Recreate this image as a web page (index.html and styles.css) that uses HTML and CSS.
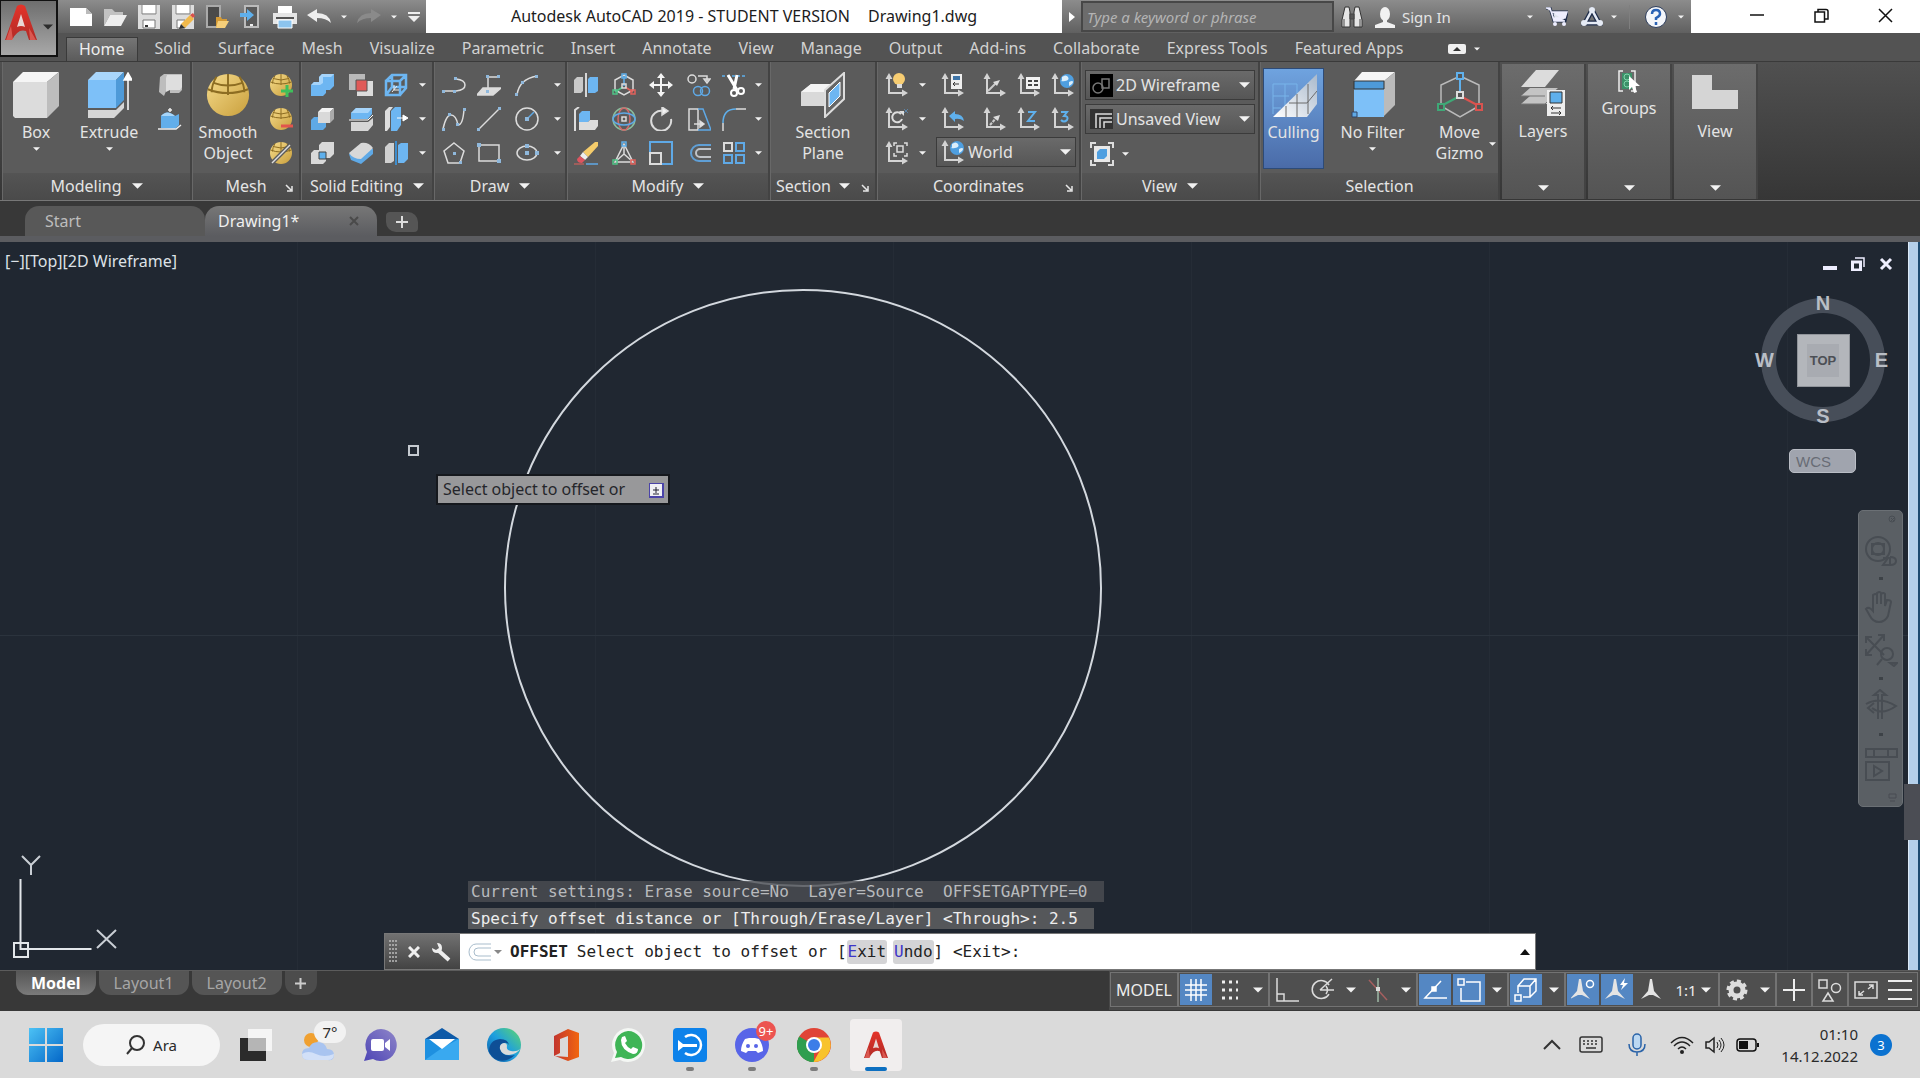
FILE: index.html
```html
<!DOCTYPE html>
<html lang="en">
<head>
    <meta charset="UTF-8">
    <meta name="viewport" content="width=device-width, initial-scale=1.0">
    <title>Autodesk AutoCAD 2019 - STUDENT VERSION</title>
    <link rel="stylesheet" href="styles.css">
</head>
<body>

<!-- Shared symbols -->
<svg class="defs" aria-hidden="true">
    <defs>
        <linearGradient id="gold" x1="0" y1="0" x2="1" y2="1"><stop offset="0" stop-color="#f6dc8c"/><stop offset="1" stop-color="#c99f3c"/></linearGradient>
        <linearGradient id="red" x1="0" y1="0" x2="0" y2="1"><stop offset="0" stop-color="#e5342a"/><stop offset="1" stop-color="#b02a26"/></linearGradient>
        <linearGradient id="win" x1="0" y1="0" x2="1" y2="1"><stop offset="0" stop-color="#4cc2f5"/><stop offset="1" stop-color="#0467c8"/></linearGradient>
        <linearGradient id="edge" x1="0" y1="1" x2="1" y2="0"><stop offset="0" stop-color="#0c59a4"/><stop offset=".5" stop-color="#1e9fdf"/><stop offset="1" stop-color="#5fd86b"/></linearGradient>
        <linearGradient id="office" x1="0" y1="0" x2="1" y2="0"><stop offset="0" stop-color="#c2352e"/><stop offset="1" stop-color="#f2660f"/></linearGradient>
        <linearGradient id="chat" x1="1" y1="0" x2="0" y2="1"><stop offset="0" stop-color="#8f86c9"/><stop offset="1" stop-color="#4d45b5"/></linearGradient>
        <linearGradient id="cull" x1="0" y1="1" x2="1" y2="0"><stop offset="0" stop-color="#fff"/><stop offset="1" stop-color="#a9b9cc"/></linearGradient>
    </defs>
    <symbol id="caret" viewBox="0 0 12 6"><path d="M0 0h12l-6 6z" fill="#f2f2f2"/></symbol>
    <symbol id="axes" viewBox="0 0 24 24"><path d="M4 4v16h16" fill="none" stroke="#d4d4d4" stroke-width="2"/><path d="M4 0l3.500 6h-7zM23 20l-6-3.500v7z" fill="#d4d4d4"/></symbol>
    <symbol id="globe" viewBox="0 0 14 14"><circle cx="7" cy="7" r="7" fill="#4f9fe0"/><path d="M2 3q4-3 6 0t-3 4-3-1zM9 8q4-2 4 0t-4 4z" fill="#dbeefb"/></symbol>
    <symbol id="ball" viewBox="0 0 24 24"><circle cx="12" cy="12" r="11" fill="url(#gold)"/><path d="M1.500 9q10 4 21 0M12 1v11M6 2.500q-2.500 4-2.500 8M18 2.500q2.500 4 2.500 8M4 5.500q8 3 16 0" fill="none" stroke="#8d6d22" stroke-width="1"/></symbol>
    <symbol id="launch" viewBox="0 0 8 8"><path d="M1 1l5 5M7 2v5h-5" fill="none" stroke="#e6e6e6" stroke-width="1.500"/></symbol>
    <symbol id="logo" viewBox="0 0 32 36"><path d="M0 36L12 2q4-3 8 0l12 34h-8l-3-9q-8-3-14 9z" fill="url(#red)"/><path d="M16 10l-4 13q4-2 8 0z" fill="#e9d8d6"/><path d="M1 36l5-14 2 14M24 24l7 12h-6z" fill="#f2776c" opacity=".6"/></symbol>
    <symbol id="offset" viewBox="0 0 24 24"><path d="M24 4H12a8 8 0 0 0 0 16h12" fill="none" stroke="#5f9fd6" stroke-width="2"/><path d="M24 8H13a4 4 0 0 0 0 8h11" fill="none" stroke="#bfc3c8" stroke-width="2"/></symbol>
    <symbol id="scale" viewBox="0 0 24 24"><path d="M11 1h2l2 12 7 8-8-4h-4l-8 4 7-8z" fill="currentColor"/></symbol>
</svg>

<header class="header">
    <button class="app-btn" aria-label="Application menu">
        <svg width="32" height="38"><use href="#logo"/></svg>
        <svg class="app-caret" width="10" height="6" viewBox="0 0 12 6"><path d="M0 0h12l-6 6z" fill="#2c2c2c"/></svg>
    </button>

    <div class="titlebar">
        <div class="quick">
            <button aria-label="New"><svg width="24" height="20" viewBox="0 0 24 20"><path d="M1 1h16l6 6v12H1z" fill="#fff"/><path d="M17 1v6h6" fill="#bbb"/></svg></button>
            <button aria-label="Open"><svg width="24" height="20" viewBox="0 0 24 20"><path d="M1 19V2h8l3 3h8v3H7z" fill="#c2c2c2"/><path d="M7 8h17l-6 11H1z" fill="#eee"/></svg></button>
            <button aria-label="Save"><svg width="24" height="24" viewBox="0 0 24 24"><path d="M1 0h22v24H1z" fill="#ddd"/><path d="M5 0h14v8H5z" fill="#fff"/><path d="M5 0v9h14V0" fill="none" stroke="#888"/><path d="M6 15h12v8H6z" fill="#fff" stroke="#777"/><path d="M8 20h3v2h-3z" fill="#333"/></svg></button>
            <button aria-label="Save As"><svg width="24" height="24" viewBox="0 0 24 24"><path d="M1 0h22v24H1z" fill="#ddd"/><path d="M5 0h14v8H5z" fill="#fff"/><path d="M5 0v9h14V0" fill="none" stroke="#888"/><path d="M6 15h8v8H6z" fill="#fff" stroke="#777"/><path d="M10 19l9-9 4 4-9 9z" fill="#f1b94b"/><path d="M19 10l3-2 2 3-2 2z" fill="#d9504a"/><path d="M10 19l-2 5 6-1z" fill="#333"/></svg></button>
            <button aria-label="Open from mobile"><svg width="24" height="24" viewBox="0 0 24 24"><path d="M2 1h13v21H2z" fill="#4a4a4a" stroke="#aaa" stroke-width="2"/><path d="M11 22V12h5l1 2h5v3z" fill="#d49a35"/><path d="M13 16h11l-4 7h-9z" fill="#f6cf7a"/></svg></button>
            <button aria-label="Save to mobile"><svg width="24" height="24" viewBox="0 0 24 24"><path d="M6 1h13v21H6z" fill="#5a5a5a" stroke="#bbb" stroke-width="2"/><path d="M11 19h3v2h-3z" fill="#eee"/><path d="M1 8h7V4l7 6-7 6v-4H1z" fill="#5fb0ec"/></svg></button>
            <button aria-label="Plot"><svg width="24" height="24" viewBox="0 0 24 24"><path d="M5 1h14v7H5z" fill="#fff"/><path d="M0 8h24v11H0z" fill="#e6e6e6"/><path d="M3 12h18v2H3z" fill="#555"/><path d="M5 15h14v8H5z" fill="#8cc4ee" stroke="#fff"/></svg></button>
            <button aria-label="Undo"><svg width="24" height="16" viewBox="0 0 24 16"><path d="M0 6l10-6v4q12 0 14 10-5-5-14-5v4z" fill="#eee"/></svg></button>
            <button class="slim" aria-label="Undo list"><svg width="6" height="4"><use href="#caret"/></svg></button>
            <button aria-label="Redo"><svg width="24" height="16" viewBox="0 0 24 16"><path d="M24 6L14 0v4Q2 4 0 14q5-5 14-5v4z" fill="#8a8a8a"/></svg></button>
            <button class="slim" aria-label="Redo list"><svg width="6" height="4"><use href="#caret"/></svg></button>
            <button class="last" aria-label="Customize"><svg width="12" height="10" viewBox="0 0 12 10"><path d="M0 0h12v2H0zM0 4h12l-6 6z" fill="#eee"/></svg></button>
        </div>
        <p class="caption">Autodesk AutoCAD 2019 - STUDENT VERSION<span>Drawing1.dwg</span></p>
        <div class="infocenter">
            <button class="info-toggle" aria-label="Collapse search"><svg width="6" height="10" viewBox="0 0 6 10"><path d="M0 0l6 5-6 5z" fill="#fff"/></svg></button>
            <input type="text" class="search" placeholder="Type a keyword or phrase" aria-label="Search">
            <button class="find" aria-label="Find"><svg width="22" height="22" viewBox="0 0 22 22"><path d="M4 1h4l1 5v15H1v-7zM14 1h4l3 13v7h-8V6z" fill="#e6e6e6" stroke="#333"/><path d="M9 8h4v5H9zM3 13v8M19 13v8" fill="#555" stroke="#444"/></svg></button>
            <button class="signin"><svg width="22" height="22" viewBox="0 0 22 22"><ellipse cx="11" cy="8" rx="5" ry="7" fill="#f1f1f1"/><path d="M9 13h4v3l8 3v3H1v-3l8-3z" fill="#f1f1f1"/></svg>Sign In<svg class="push" width="6" height="4"><use href="#caret"/></svg></button>
            <button class="cart" aria-label="App store"><svg width="22" height="20" viewBox="0 0 22 20"><path d="M0 1h4l4 13h11l2-9H6" fill="#dfe4ee" stroke="#1f2d4a" stroke-width="3"/><path d="M0 1h4l4 13h11M6 5h15l-2 6H8" fill="#eef" stroke="#eef" stroke-width="1.500"/><circle cx="9" cy="17" r="2" fill="#eef"/><circle cx="18" cy="17" r="2" fill="#eef"/></svg></button>
            <button class="a360" aria-label="Stay connected"><svg width="22" height="20" viewBox="0 0 22 20"><path d="M11 3L4 16h14z" fill="none" stroke="#1f2d4a" stroke-width="5"/><path d="M11 3L4 16h14z" fill="none" stroke="#e6ebf5" stroke-width="2.500"/><circle cx="11" cy="3" r="3" fill="#e6ebf5"/><circle cx="3" cy="16" r="3" fill="#e6ebf5"/><circle cx="19" cy="16" r="3" fill="#e6ebf5"/></svg><svg width="6" height="4"><use href="#caret"/></svg></button>
            <button class="help" aria-label="Help"><svg width="24" height="24" viewBox="0 0 24 24"><circle cx="12" cy="12" r="10.500" fill="#f4f6fa" stroke="#2d3d5c"/><path d="M8 9q0-4 4-4t4 4q0 2-4 4v2M12 17v3" fill="none" stroke="#2a62b4" stroke-width="2.500"/></svg><svg width="6" height="4"><use href="#caret"/></svg></button>
        </div>
        <div class="window-btns">
            <button aria-label="Minimize"><svg width="14" height="14" viewBox="0 0 14 14"><path d="M0 7h14" stroke="#111" stroke-width="1.500"/></svg></button>
            <button aria-label="Restore"><svg width="15" height="15" viewBox="0 0 15 15"><path d="M1 4h9.500v10H1zM4 4V1.500h8q2 0 2 2V11h-3" fill="none" stroke="#111" stroke-width="1.500"/></svg></button>
            <button aria-label="Close"><svg width="15" height="15" viewBox="0 0 15 15"><path d="M1 1l13 13M14 1L1 14" stroke="#111" stroke-width="1.500"/></svg></button>
        </div>
    </div>

    <nav class="tabs">
        <a href="#" class="active">Home</a>
        <a href="#">Solid</a>
        <a href="#">Surface</a>
        <a href="#">Mesh</a>
        <a href="#">Visualize</a>
        <a href="#">Parametric</a>
        <a href="#">Insert</a>
        <a href="#">Annotate</a>
        <a href="#">View</a>
        <a href="#">Manage</a>
        <a href="#">Output</a>
        <a href="#">Add-ins</a>
        <a href="#">Collaborate</a>
        <a href="#">Express Tools</a>
        <a href="#">Featured Apps</a>
        <button class="minimize" aria-label="Minimize ribbon"><svg width="18" height="10" viewBox="0 0 18 10"><rect width="18" height="10" rx="2" fill="#f0f0f0"/><path d="M5 7h8L9 3z" fill="#333"/></svg><svg width="6" height="4"><use href="#caret"/></svg></button>
    </nav>
</header>

<div class="ribbon">
    <!-- Modeling -->
    <section class="panel modeling">
        <div class="body">
            <button class="big"><svg width="46" height="46" viewBox="0 0 46 46"><path d="M0 10L10 0h36L34 10z" fill="#f5f5f5"/><path d="M0 10h34v36H2l-2-2z" fill="#dcdcdc"/><path d="M34 10L46 0v34L34 46z" fill="#bdbdbd"/></svg>Box<svg width="7" height="4"><use href="#caret"/></svg></button>
            <button class="big"><svg width="46" height="46" viewBox="0 0 46 46"><path d="M2 38h28l8-8v6L28 46H2z" fill="#d6d6d6"/><path d="M2 8l8-8h28l-8 8z" fill="#a9d6fb"/><path d="M2 8h28v28H2z" fill="#7dc0f8"/><path d="M30 8l8-8v28l-8 8z" fill="#4e9ad8"/><path d="M42 38V6M38 8l4-7 4 7z" fill="#fff" stroke="#fff" stroke-width="1.500"/></svg>Extrude<svg width="7" height="4"><use href="#caret"/></svg></button>
            <div class="grid">
                <button aria-label="Polysolid"><svg viewBox="0 0 24 24"><path d="M2 4l4-3h18v16l-3 3h-9V9L6 23l-5-4z" fill="#bdbdbd"/><path d="M9 2h15v12l-2 3H12l-4 2V5z" fill="#dedede"/></svg></button>
                <button aria-label="Presspull"><svg viewBox="0 0 24 24"><path d="M3 21V9q6-7 14 0l4-2v11l-4 4z" fill="#62aeea"/><path d="M3 9q6-7 14 0z" fill="#a8d5f8"/><path d="M12 5V1M10 3h4M0 22h18l5-4" fill="none" stroke="#eee" stroke-width="1.500"/></svg></button>
            </div>
        </div>
        <footer>Modeling<svg width="11" height="6"><use href="#caret"/></svg></footer>
    </section>

    <!-- Mesh -->
    <section class="panel mesh">
        <div class="body">
            <button class="big"><svg width="46" height="46"><use href="#ball"/></svg>Smooth<br>Object</button>
            <div class="grid">
                <button aria-label="Smooth more"><svg viewBox="0 0 24 24"><use href="#ball"/><path d="M18 12v12M12 18h12" stroke="#3fbf5b" stroke-width="3"/></svg></button>
                <button aria-label="Smooth less"><svg viewBox="0 0 24 24"><use href="#ball"/><path d="M12 19h12" stroke="#e2554d" stroke-width="3"/></svg></button>
                <button aria-label="Refine mesh"><svg viewBox="0 0 24 24"><use href="#ball"/><path d="M3 22L21 4" stroke="#5b5b5b" stroke-width="4"/><path d="M3 22L21 4" stroke="#ddd" stroke-width="1.500"/></svg></button>
            </div>
        </div>
        <footer>Mesh<svg class="corner" width="8" height="8"><use href="#launch"/></svg></footer>
    </section>

    <!-- Solid editing -->
    <section class="panel solid">
        <div class="body">
            <div class="grid">
                <button aria-label="Union"><svg viewBox="0 0 24 24"><path d="M1 12l3-3h5V4l3-3h12v12l-4 4h-4v3l-3 3H1z" fill="#6db6f2"/><path d="M1 12l3-3h5V4l3-3h12l-3 3h-8v6l-3 2z" fill="#a6d4fa"/></svg></button>
                <button aria-label="Intersect"><svg viewBox="0 0 24 24"><path d="M0 1h16v16H0z" fill="#b9b9b9"/><path d="M8 8h16v15H8z" fill="#dcdcdc"/><path d="M7 7h11v11H7z" fill="#e05a58" stroke="#555"/></svg></button>
                <button aria-label="Extract edges"><svg viewBox="0 0 24 24"><path d="M2 8h14v14H2zM2 8l6-6h14v13l-6 7M16 8l6-6M8 2v12M8 14L2 22M8 14h14" fill="none" stroke="#6db6f2" stroke-width="2.500"/><path d="M8 19l5-6M10 12v5h5" stroke="#eee" fill="none"/></svg></button>
                <button class="drop" aria-label="More edges"><svg width="7" height="4"><use href="#caret"/></svg></button>
                <button aria-label="Subtract"><svg viewBox="0 0 24 24"><path d="M1 13l3-3h12v10l-3 3H1z" fill="#5fa9e6"/><path d="M8 5l4-4h12l-4 4z" fill="#f2f2f2"/><path d="M8 5h12v11H8z" fill="#d9d9d9"/><path d="M20 5l4-4v11l-4 4z" fill="#aaa"/></svg></button>
                <button aria-label="Slice"><svg viewBox="0 0 24 24"><path d="M2 6l5-5h16v6l-4 5H2z" fill="#6db6f2"/><path d="M2 6l5-5h16l-4 5z" fill="#a6d4fa"/><path d="M2 15h17l5-4v7l-5 6H2z" fill="#d6d6d6"/><path d="M0 13h19l5-5" stroke="#fff" fill="none"/></svg></button>
                <button aria-label="Thicken"><svg viewBox="0 0 24 24"><path d="M1 4l4-4h4L6 4v16l-3 4H1z" fill="#ddd"/><path d="M7 4l4-4h6v18l-4 6H7z" fill="#6db6f2"/><path d="M13 11h8M19 8l5 3-5 3z" fill="#fff" stroke="#fff"/></svg></button>
                <button class="drop" aria-label="More faces"><svg width="7" height="4"><use href="#caret"/></svg></button>
                <button aria-label="Interfere"><svg viewBox="0 0 24 24"><path d="M1 12l3-3h5V4l3-3h12v12l-4 4h-4v3l-3 3H1z" fill="#d9d9d9"/><path d="M9 11h7v7H9z" fill="#5fb0ec" stroke="#444"/></svg></button>
                <button aria-label="Fillet edge"><svg viewBox="0 0 24 24"><path d="M0 13L12 3l12 5v5L12 23 2 19z" fill="#5fa9e6"/><path d="M0 12L12 2q8-1 12 5L12 18Q4 18 0 12z" fill="#d8d8d8"/></svg></button>
                <button aria-label="Separate"><svg viewBox="0 0 24 24"><path d="M1 6l4-4h5v18l-3 2H1z" fill="#d0d0d0"/><path d="M14 4l3-2h7v16l-4 4h-6z" fill="#6db6f2"/><path d="M12 0v24" stroke="#3f8dcc" stroke-width="2"/></svg></button>
                <button class="drop" aria-label="More bodies"><svg width="7" height="4"><use href="#caret"/></svg></button>
            </div>
        </div>
        <footer>Solid Editing<svg width="11" height="6"><use href="#caret"/></svg></footer>
    </section>

    <!-- Draw -->
    <section class="panel draw">
        <div class="body">
            <div class="grid">
                <button aria-label="Polyline"><svg viewBox="0 0 24 24" class="ln"><path d="M1 18h13q9-1 9-6t-9-6"/><path class="dot" d="M0 17h3v3H0zM11 17h3v3h-3zM12 4h3v3h-3z"/></svg></button>
                <button aria-label="3D polyline"><svg viewBox="0 0 24 24" class="ln"><path d="M6 15h18l-8 7H0z" fill="#dcdcdc"/><path d="M11 18V4h11"/><path class="dot" d="M9 2h3v3H9zM20 2h3v3h-3zM9 17h3v3H9z"/></svg></button>
                <button aria-label="Arc"><svg viewBox="0 0 24 24" class="ln"><path d="M2 22Q4 6 22 3"/><path class="dot" d="M0 20h3v3H0zM6 8h3v3H6zM20 2h3v3h-3z"/></svg></button>
                <button class="drop" aria-label="More arcs"><svg width="7" height="4"><use href="#caret"/></svg></button>
                <button aria-label="Spline"><svg viewBox="0 0 24 24" class="ln"><path d="M1 22Q4 8 9 8t7 10q5 0 6-16"/><path class="dot" d="M0 21h3v3H0zM6 6h3v3H6zM14 16h3v3h-3zM21 1h3v3h-3z"/></svg></button>
                <button aria-label="Line"><svg viewBox="0 0 24 24" class="ln"><path d="M2 22L22 2"/><path class="dot" d="M0 21h3v3H0zM21 0h3v3h-3z"/></svg></button>
                <button aria-label="Circle"><svg viewBox="0 0 24 24" class="ln"><circle cx="12" cy="12" r="11"/><path d="M12 12l7-7" stroke="#5fa9e6"/><path class="dot" d="M10 10h4v4h-4z"/></svg></button>
                <button class="drop" aria-label="More circles"><svg width="7" height="4"><use href="#caret"/></svg></button>
                <button aria-label="Polygon"><svg viewBox="0 0 24 24" class="ln"><path d="M12 2l10 8-4 12H6L2 10z"/><path class="dot" d="M11 11h3v3h-3zM17 20h3v3h-3z"/></svg></button>
                <button aria-label="Rectangle"><svg viewBox="0 0 24 24" class="ln"><path d="M2 4h20v16H2z"/><path class="dot" d="M0 2h4v4H0zM20 18h4v4h-4z"/></svg></button>
                <button aria-label="Ellipse"><svg viewBox="0 0 24 24" class="ln"><ellipse cx="12" cy="12" rx="10" ry="7"/><path class="dot" d="M10 3h4v4h-4zM20 10h4v4h-4zM10 10h4v4h-4z"/></svg></button>
                <button class="drop" aria-label="More ellipses"><svg width="7" height="4"><use href="#caret"/></svg></button>
            </div>
        </div>
        <footer>Draw<svg width="11" height="6"><use href="#caret"/></svg></footer>
    </section>

    <!-- Modify -->
    <section class="panel modify">
        <div class="body">
            <div class="grid">
                <button aria-label="3D mirror"><svg viewBox="0 0 24 24"><path d="M0 7l3-3h6v14l-2 2H0z" fill="#c9c9c9"/><path d="M14 6l2-2h8v14l-3 2h-7z" fill="#6db6f2"/><path d="M12 0v24" stroke="#fff" stroke-width="1.500"/></svg></button>
                <button aria-label="3D move"><svg viewBox="0 0 24 24" class="ln"><path d="M12 2l9 5v10l-9 5-9-5V7z"/><path d="M12 13V3" stroke="#5fb0ec"/><path d="M11 14l-8 5" stroke="#4fc487"/><path d="M13 14l8 5" stroke="#e2625c"/><path d="M10 1h4v4h-4z" stroke="#5fb0ec"/><path d="M1 17h4v4H1z" stroke="#4fc487"/><path d="M19 17h4v4h-4z" stroke="#e2625c"/><path d="M10 11h4v4h-4z"/></svg></button>
                <button aria-label="Move"><svg viewBox="0 0 24 24"><path d="M12 3v18M3 12h18" stroke="#f4f4f4" stroke-width="2"/><path d="M12 0l4 5H8zM12 24l4-5H8zM0 12l5-4v8zM24 12l-5-4v8z" fill="#f4f4f4"/></svg></button>
                <button aria-label="Copy"><svg viewBox="0 0 24 24" class="ln"><circle cx="5" cy="6" r="4"/><path d="M11 3h9v5M17 6l3 4 3-4z"/><circle cx="11" cy="18" r="4.500" stroke="#5fa9e6"/><circle cx="18" cy="18" r="4.500" stroke="#5fa9e6"/></svg></button>
                <button aria-label="Trim"><svg viewBox="0 0 24 24"><path d="M0 3h24" stroke="#5fb0ec" stroke-width="1.500" stroke-dasharray="3 2"/><path d="M6 2l9 15M15 2l-3 14" stroke="#fff" stroke-width="3"/><circle cx="12" cy="20" r="3" fill="none" stroke="#fff" stroke-width="2"/><circle cx="19" cy="18" r="3" fill="none" stroke="#fff" stroke-width="2"/></svg></button>
                <button class="drop" aria-label="Trim list"><svg width="7" height="4"><use href="#caret"/></svg></button>
                <button aria-label="3D align"><svg viewBox="0 0 24 24"><path d="M1 24V3l4-3" stroke="#ddd" stroke-width="2" fill="none"/><path d="M5 7l3-3h8v9l-3 3H5z" fill="#6db6f2"/><path d="M5 15l9 0 2-2h8v6l-3 4H5z" fill="#ddd"/></svg></button>
                <button aria-label="3D rotate"><svg viewBox="0 0 24 24" class="ln"><circle cx="12" cy="12" r="11" stroke="#8bbf9e"/><ellipse cx="12" cy="12" rx="6" ry="11" stroke="#d0696b"/><ellipse cx="12" cy="12" rx="11" ry="6" stroke="#5fa9e6"/><path d="M10 10h4v4h-4z"/></svg></button>
                <button aria-label="Rotate"><svg viewBox="0 0 24 24" class="ln"><path d="M14 4A10 10 0 1 0 22 12" stroke-width="2"/><path d="M13 0l6 4-6 4z" fill="#f2f2f2"/></svg></button>
                <button aria-label="Stretch"><svg viewBox="0 0 24 24" class="ln"><path d="M2 2h9v21H2z"/><path d="M11 2h5l8 21H11" stroke="#5fa9e6"/><path d="M7 17h8M13 14l4 3-4 3z" fill="#fff"/></svg></button>
                <button aria-label="Fillet"><svg viewBox="0 0 24 24" class="ln"><path d="M1 24V16" /><path d="M1 16Q1 2 14 2" stroke="#5fb0ec"/><path d="M14 2h10"/></svg></button>
                <button class="drop" aria-label="Fillet list"><svg width="7" height="4"><use href="#caret"/></svg></button>
                <button aria-label="Erase"><svg viewBox="0 0 24 24"><path d="M9 11L21 1l3 0v4L14 16z" fill="#f5cc6b"/><path d="M9 11l5 5-3 3-5-4z" fill="#eee"/><path d="M6 15l5 4-3 3q-5 0-5-4z" fill="#dd5560"/><path d="M0 23h10" stroke="#e2625c"/><path d="M12 23h12" stroke="#5fa9e6" stroke-width="1.500"/></svg></button>
                <button aria-label="3D scale"><svg viewBox="0 0 24 24" class="ln"><path d="M12 3l9 18H3zM12 13L3 21M12 13l9 8M12 3v10"/><path d="M10 1h4v4h-4z" stroke="#5fb0ec"/><path d="M1 19h4v4H1z" stroke="#4fc487"/><path d="M19 19h4v4h-4z" stroke="#e2625c"/></svg></button>
                <button aria-label="Scale"><svg viewBox="0 0 24 24" class="ln"><path d="M1 12V1h22v22H13" stroke="#5fa9e6" stroke-width="2"/><path d="M1 12h11v11H1z" stroke-width="2"/></svg></button>
                <button aria-label="Offset"><svg viewBox="0 0 24 24"><use href="#offset"/></svg></button>
                <button aria-label="Array"><svg viewBox="0 0 24 24" class="ln"><path d="M2 2h8v8H2z" stroke-width="2"/><path d="M14 2h8v8h-8zM2 14h8v8H2zM14 14h8v8h-8z" stroke="#5fa9e6" stroke-width="2"/></svg></button>
                <button class="drop" aria-label="Array list"><svg width="7" height="4"><use href="#caret"/></svg></button>
            </div>
        </div>
        <footer>Modify<svg width="11" height="6"><use href="#caret"/></svg></footer>
    </section>

    <!-- Section -->
    <section class="panel section">
        <div class="body">
            <button class="big"><svg width="46" height="46" viewBox="0 0 46 46"><path d="M1 20l10-8h20v22H1z" fill="#d9d9d9"/><path d="M1 20l10-8h20l-6 8z" fill="#f4f4f4"/><path d="M25 18L44 1v26L25 45z" fill="#666" stroke="#ddd" stroke-width="2"/><path d="M29 21l11-11v14L29 35z" fill="#6db6f2" stroke="#fff"/></svg>Section<br>Plane</button>
        </div>
        <footer>Section<svg width="11" height="6"><use href="#caret"/></svg><svg class="corner" width="8" height="8"><use href="#launch"/></svg></footer>
    </section>

    <!-- Coordinates -->
    <section class="panel coords">
        <div class="body">
            <div class="grid">
                <button aria-label="UCS icon"><svg viewBox="0 0 24 24"><use href="#axes"/><circle cx="14" cy="6" r="6" fill="#f7cd72"/><path d="M12 11h5v4h-5z" fill="#ddd"/></svg></button>
                <button class="drop" aria-label="UCS icon list"><svg width="7" height="4"><use href="#caret"/></svg></button>
                <button aria-label="Named UCS"><svg viewBox="0 0 24 24"><use href="#axes"/><path d="M10 1h11v15H10z" fill="#eee"/><path d="M12 3h7v4h-7z" fill="#3f75a8"/><path d="M12 11h6M14 9l-2 2 2 2" stroke="#333" fill="none"/></svg></button>
                <button aria-label="Origin"><svg viewBox="0 0 24 24"><use href="#axes"/><path d="M5 18L14 9" stroke="#ccc" stroke-width="2"/><path d="M17 7l-7 2 4 4z" fill="#ddd"/></svg></button>
                <button aria-label="UCS settings"><svg viewBox="0 0 24 24"><use href="#axes"/><path d="M9 4h14v12H9z" fill="#f2f2f2"/><path d="M11 8h4M17 8h4M11 12h4M17 12h4" stroke="#444" stroke-width="2"/></svg></button>
                <button aria-label="World UCS"><svg viewBox="0 0 24 24"><use href="#axes"/><use href="#globe" x="9" y="1" width="14" height="14"/></svg></button>
                <button aria-label="Rotate UCS"><svg viewBox="0 0 24 24"><use href="#axes"/><path d="M16 7a5 5 0 1 0 1 5" fill="none" stroke="#ddd" stroke-width="2"/><path d="M14 4h5v5z" fill="#ddd"/><path d="M19 2l4 4M23 2l-4 4" stroke="#5d84a6"/></svg></button>
                <button class="drop" aria-label="Rotate UCS list"><svg width="7" height="4"><use href="#caret"/></svg></button>
                <button aria-label="UCS previous"><svg viewBox="0 0 24 24"><use href="#axes"/><path d="M8 9l6-5v3q8 0 9 7-4-3-9-2v3z" fill="#5fb0ec"/></svg></button>
                <button aria-label="Z-axis vector"><svg viewBox="0 0 24 24"><use href="#axes"/><path d="M7 18l7-8" stroke="#ccc" stroke-width="2" stroke-dasharray="3 1"/><path d="M17 8l-7 2 5 4z" fill="#ddd"/></svg></button>
                <button aria-label="Z rotation"><svg viewBox="0 0 24 24"><use href="#axes"/><path d="M11 5h7l-7 9h7" fill="none" stroke="#5fb0ec" stroke-width="2"/></svg></button>
                <button aria-label="3-point UCS"><svg viewBox="0 0 24 24"><use href="#axes"/><path d="M10 5h6l-3 4q5 0 3 4-3 3-6 0" fill="none" stroke="#5fb0ec" stroke-width="2"/></svg></button>
                <button aria-label="UCS view"><svg viewBox="0 0 24 24"><use href="#axes"/><path d="M9 5V2h3M19 2h3v3M22 12v3h-3M12 15H9v-3M12 5h6v6h-6z" fill="none" stroke="#ddd" stroke-width="1.500"/></svg></button>
                <button class="drop" aria-label="UCS view list"><svg width="7" height="4"><use href="#caret"/></svg></button>
                <div class="combo world">
                    <svg width="24" height="24" viewBox="0 0 24 24"><use href="#axes"/><use href="#globe" x="9" y="1" width="14" height="14"/></svg>
                    <select aria-label="Coordinate system"><option>World</option></select>
                    <svg width="11" height="6"><use href="#caret"/></svg>
                </div>
            </div>
        </div>
        <footer>Coordinates<svg class="corner" width="8" height="8"><use href="#launch"/></svg></footer>
    </section>

    <!-- View -->
    <section class="panel view">
        <div class="body stack">
            <div class="combo">
                <svg width="23" height="23" viewBox="0 0 23 23"><path d="M0 0h23v23H0z" fill="#000"/><circle cx="8" cy="14" r="5" fill="none" stroke="#777" stroke-width="1.500"/><path d="M12 5h7v9h-7z" fill="none" stroke="#777" stroke-width="1.500"/></svg>
                <select aria-label="Visual style"><option>2D Wireframe</option></select>
                <svg width="11" height="6"><use href="#caret"/></svg>
            </div>
            <div class="combo">
                <svg width="23" height="20" viewBox="0 0 23 20"><path d="M0 0h23v20H0z" fill="#333"/><path d="M6 19V5h16M10 19V9h12M14 19v-6h8" fill="none" stroke="#ddd" stroke-width="1.500"/></svg>
                <select aria-label="Saved view"><option>Unsaved View</option></select>
                <svg width="11" height="6"><use href="#caret"/></svg>
            </div>
            <button class="viewbtn" aria-label="View manager"><svg width="24" height="24" viewBox="0 0 24 24"><path d="M1 6V1h5M18 1h5v5M23 18v5h-5M6 23H1v-5" fill="none" stroke="#ddd" stroke-width="2"/><path d="M4 4h16v16H4z" fill="#e8e8e8"/><path d="M7 10l3-3h7v7l-3 3H7z" fill="#4f9fe0"/></svg><svg width="7" height="4"><use href="#caret"/></svg></button>
        </div>
        <footer>View<svg width="11" height="6"><use href="#caret"/></svg></footer>
    </section>

    <!-- Selection -->
    <section class="panel selection">
        <div class="body">
            <button class="big on"><svg width="46" height="46" viewBox="0 0 46 46"><path d="M2 12h24M2 24h16M2 36h8M2 12v30M14 12v22M26 12v12" stroke="#79b4ea" fill="none"/><path d="M2 45L46 2v30L36 45z" fill="url(#cull)"/><path d="M15 34v11M26 22v23M37 12v30M18 31h18l10-12" stroke="#6b6b6b" fill="none"/></svg>Culling</button>
            <button class="big"><svg width="46" height="46" viewBox="0 0 46 46"><path d="M4 9L12 0h33L34 9z" fill="#f5f5f5"/><path d="M34 9L45 0v33L34 44z" fill="#bbb"/><path d="M4 9h30v36H4z" fill="#7dc0f8"/><path d="M4 9h30v8H4z" fill="#4e9ad8" stroke="#333"/><path d="M2 40h5v5H2z" fill="#5fa9e6" stroke="#346"/></svg>No Filter<svg width="7" height="4"><use href="#caret"/></svg></button>
            <button class="big gizmo"><svg width="46" height="46" viewBox="0 0 46 46"><path d="M23 4l19 9v21l-19 11L4 34V13z" fill="none" stroke="#bbb" stroke-width="1.500"/><path d="M23 21V4" stroke="#5fb0ec" stroke-width="2"/><path d="M21 25L4 34" stroke="#3fa877" stroke-width="2"/><path d="M25 25l17 9" stroke="#d9534f" stroke-width="2"/><path d="M20 1h6v6h-6z" fill="#555" stroke="#5fb0ec" stroke-width="2"/><path d="M1 32h6v6H1z" fill="#555" stroke="#3fa877" stroke-width="2"/><path d="M39 32h6v6h-6z" fill="#555" stroke="#d9534f" stroke-width="2"/><path d="M20 20h6v6h-6z" fill="#555" stroke="#ddd" stroke-width="2"/></svg>Move<br>Gizmo<svg class="side" width="7" height="4"><use href="#caret"/></svg></button>
        </div>
        <footer>Selection</footer>
    </section>

    <!-- Collapsed panels -->
    <button class="folded">
        <svg width="46" height="46" viewBox="0 0 46 46"><path d="M1 34l9-8h28l-9 8zM1 26l9-8h28l-9 8z" fill="#c4c4c4"/><path d="M1 17L16 0h23L25 17z" fill="#dcdcdc"/><path d="M1 34h24l4-4M1 26h24" stroke="#777" fill="none"/><path d="M27 20h18v26H27z" fill="#eee"/><path d="M30 22h12v11H30z" fill="#5fb0ec" stroke="#333"/><path d="M31 38h10M33 36l-2 2 2 2M31 43h10M39 41l2 2-2 2" stroke="#333" fill="none"/></svg>
        Layers
        <svg class="down" width="11" height="6"><use href="#caret"/></svg>
    </button>
    <button class="folded">
        <svg width="24" height="23" viewBox="0 0 24 23"><path d="M6 1H2v20h4M14 1h4v20h-4" fill="none" stroke="#eee" stroke-width="1.500"/><path d="M5 3h10v16H5z" fill="#3c8f68"/><circle cx="10" cy="7" r="3" fill="none" stroke="#7fd6ab"/><circle cx="10" cy="14" r="3" fill="none" stroke="#7fd6ab"/><path d="M12 6l11 10h-5l2 6-3 1-2-6-3 3z" fill="#fff"/></svg>
        Groups
        <svg class="down" width="11" height="6"><use href="#caret"/></svg>
    </button>
    <button class="folded">
        <svg width="46" height="46" viewBox="0 0 46 46"><path d="M0 5h20v15h26v19H0z" fill="#d5d5d5"/></svg>
        View
        <svg class="down" width="11" height="6"><use href="#caret"/></svg>
    </button>
</div>

<div class="files">
    <a href="#" class="file">Start</a>
    <a href="#" class="file current">Drawing1*<svg width="10" height="10" viewBox="0 0 10 10"><path d="M1 1l8 8M9 1L1 9" stroke="#4a4a4a" stroke-width="2"/></svg></a>
    <button class="add" aria-label="New drawing"><svg width="12" height="12" viewBox="0 0 12 12"><path d="M6 0v12M0 6h12" stroke="#ddd" stroke-width="2"/></svg></button>
</div>

<main class="canvas">
    <p class="view-label">[−][Top][2D Wireframe]</p>
    <svg class="circle" width="600" height="600" viewBox="0 0 600 600"><circle cx="300" cy="300" r="298" fill="none" stroke="#d3d8de" stroke-width="2"/></svg>

    <div class="view-btns">
        <button aria-label="Minimize drawing"><svg width="14" height="14" viewBox="0 0 14 14"><path d="M0 9h14v4H0z" fill="#eef"/></svg></button>
        <button aria-label="Restore drawing"><svg width="14" height="14" viewBox="0 0 14 14"><path d="M1.500 5h8v8h-8z" fill="none" stroke="#eef" stroke-width="3"/><path d="M4 1h9v9" fill="none" stroke="#eef" stroke-width="1.500"/></svg></button>
        <button aria-label="Close drawing"><svg width="14" height="14" viewBox="0 0 14 14"><path d="M2 2l10 10M12 2L2 12" stroke="#eef" stroke-width="3"/></svg></button>
    </div>

    <div class="compass">
        <span class="n">N</span><span class="w">W</span><button class="cube"><span>TOP</span></button><span class="e">E</span><span class="s">S</span>
    </div>
    <button class="wcs">WCS</button>

    <div class="navbar">
        <svg class="tiny" width="9" height="9" viewBox="0 0 9 9"><circle cx="4" cy="4" r="3"/><path d="M3 3l3 3M6 3L3 6"/></svg>
        <button aria-label="Steering wheel"><svg width="34" height="34" viewBox="0 0 34 34"><circle cx="14" cy="15" r="12"/><circle cx="14" cy="15" r="6"/><path d="M8 10h12v10H8zM19 24h5l-5 7h6M26 23v8q6 0 6-4t-6-4"/></svg></button>
        <i></i>
        <button aria-label="Pan"><svg width="34" height="34" viewBox="0 0 34 34"><path d="M9 17V5q3-2 4 0v9V3q3-2 4 0v11V4q3-2 4 0v12l2-6q4 0 4 2l-3 14q-3 6-9 6-6 0-9-6L2 19q3-3 7 2z"/></svg></button>
        <button aria-label="Zoom"><svg width="34" height="34" viewBox="0 0 34 34"><path d="M2 4l18 18M20 2L2 22M2 10V4h6M14 2h6v6M2 16v6h6"/><circle cx="23" cy="21" r="6"/><path d="M18 26l-5 6M26 30h7l-3 3z"/></svg></button>
        <i></i>
        <button aria-label="Orbit"><svg width="34" height="34" viewBox="0 0 34 34"><path d="M14 30V6h-4l6-5 6 5h-4v24M2 15q14-8 30 2-14 10-24 2M10 24l-6-5 6-5"/></svg></button>
        <i></i>
        <button aria-label="ShowMotion"><svg width="34" height="38" viewBox="0 0 34 38"><path d="M2 4h31v8H2zM10 4v8M24 4v8M2 17h23v18H2zM10 21v10l8-5z"/></svg></button>
        <svg class="tiny" width="9" height="9" viewBox="0 0 9 9"><path d="M1 1h7v4H1zM2 8h5"/></svg>
    </div>
    <div class="scroll"></div>
    <div class="thumb"></div>

    <svg class="ucs" width="130" height="112" viewBox="0 0 130 112">
        <path d="M20.500 24v70h71M14 88h14v14H14z" fill="none" stroke="#e2e6ea" stroke-width="2"/>
        <path d="M22 1l9 9 9-9M31 10v10M97 75l19 18M116 75L97 93" fill="none" stroke="#c9ced4" stroke-width="2"/>
    </svg>

    <div class="pickbox"></div>
    <div class="prompt">Select object to offset or <svg width="15" height="15" viewBox="0 0 15 15"><path d="M0 0h15v15H0z" fill="#4a43a8"/><path d="M1 1h12v12H1z" fill="#f0f0f4"/><path d="M4 7h6M7 4v6M4 11h6" stroke="#223"/></svg></div>

    <div class="command">
        <p class="history old">Current settings: Erase source=No&nbsp; Layer=Source&nbsp; OFFSETGAPTYPE=0</p>
        <p class="history">Specify offset distance or [Through/Erase/Layer] &lt;Through&gt;: 2.5</p>
        <div class="cmdbar">
            <div class="handle">
                <svg width="8" height="24" viewBox="0 0 8 24"><path d="M1 0v24M4 0v24M7 0v24" stroke="#bbb" stroke-dasharray="2 2" stroke-width="1.500"/></svg>
                <button aria-label="Close command line"><svg width="12" height="12" viewBox="0 0 12 12"><path d="M1 1l10 10M11 1L1 11" stroke="#f0f0f0" stroke-width="3"/></svg></button>
                <button aria-label="Customize command line"><svg width="20" height="20" viewBox="0 0 20 20"><path d="M8 9l10 9" stroke="#eee" stroke-width="4"/><path d="M6 1q5 0 5 5t-5 5-5-5l4 2 3-2z" fill="#eee"/></svg></button>
            </div>
            <button class="recent" aria-label="Recent commands"><svg width="24" height="20" viewBox="0 2 24 20"><path d="M24 4H9a7 8 0 0 0 0 16h15M24 8H11a4 4 0 0 0 0 8h13" fill="none" stroke="#a9bdcc" stroke-width="1"/></svg><svg width="8" height="4" viewBox="0 0 12 6"><path d="M0 0h12l-6 6z" fill="#888"/></svg></button>
            <b>OFFSET</b>
            <span>Select object to offset or [</span><button class="opt"><u>E</u>xit</button><button class="opt"><u>U</u>ndo</button><span>] &lt;Exit&gt;:</span>
            <input type="text" aria-label="Command">
            <svg class="up" width="10" height="6" viewBox="0 0 10 6"><path d="M0 6h10L5 0z" fill="#111"/></svg>
        </div>
    </div>
</main>

<div class="status">
    <nav class="layouts">
        <a href="#" class="current">Model</a>
        <a href="#">Layout1</a>
        <a href="#">Layout2</a>
        <button aria-label="New layout"><svg width="11" height="11" viewBox="0 0 11 11"><path d="M5.500 0v11M0 5.500h11" stroke="#ccc" stroke-width="2"/></svg></button>
    </nav>
    <div class="toggles">
        <div class="cell model"><button>MODEL</button></div>
        <div class="cell">
            <button class="on" aria-label="Grid"><svg width="22" height="22" viewBox="0 0 22 22"><path d="M6 0v22M11 0v22M16 0v22M0 6h22M0 11h22M0 16h22" stroke="#fff" stroke-width="1.500"/></svg></button>
            <button aria-label="Snap"><svg width="20" height="20" viewBox="0 0 20 20"><path d="M2 2h16M2 10h16M2 18h16" stroke="#eee" stroke-width="3" stroke-dasharray="3 4"/></svg></button>
            <button class="thin" aria-label="Snap list"><svg width="10" height="6"><use href="#caret"/></svg></button>
        </div>
        <div class="cell">
            <button aria-label="Ortho"><svg width="24" height="24" viewBox="0 0 24 24" class="ln"><path d="M2 0v23h22M2 16h7v7"/></svg></button>
            <button class="wide" aria-label="Polar"><svg width="24" height="24" viewBox="0 0 24 24" class="ln"><path d="M19 7a9 9 0 1 0 0 9M10 12h14M10 12L22 1M16 8q3 4 0 8"/></svg></button>
            <button class="thin" aria-label="Polar list"><svg width="10" height="6"><use href="#caret"/></svg></button>
            <button aria-label="Isodraft"><svg width="22" height="24" viewBox="0 0 22 24"><path d="M2 2l18 20" stroke="#a55f5f" stroke-width="1.500"/><path d="M11 0v24" stroke="#9fb9a6" stroke-width="1.500"/><path d="M9 9h4v4H9z" fill="#ddd"/></svg></button>
            <button class="thin" aria-label="Isodraft list"><svg width="10" height="6"><use href="#caret"/></svg></button>
        </div>
        <div class="cell">
            <button class="on" aria-label="Object snap tracking"><svg width="24" height="24" viewBox="0 0 24 24" class="ln"><path d="M18 3L2 20h22"/><path d="M9 9h4v4H9z" fill="#fff"/></svg></button>
            <button class="on" aria-label="Object snap"><svg width="24" height="24" viewBox="0 0 24 24" class="ln"><path d="M9 4h14v19H4V10M1 1h6v6H1z"/></svg></button>
            <button class="thin" aria-label="Object snap list"><svg width="10" height="6"><use href="#caret"/></svg></button>
        </div>
        <div class="cell">
            <button class="on" aria-label="3D object snap"><svg width="24" height="24" viewBox="0 0 24 24" class="ln"><path d="M4 15V8h12v11H9M4 8l6-7h12v12l-6 6M16 8l6-7M1 17h6v6H1z"/></svg></button>
            <button class="thin" aria-label="3D snap list"><svg width="10" height="6"><use href="#caret"/></svg></button>
        </div>
        <div class="cell">
            <button class="on" aria-label="Annotation visibility"><svg width="24" height="24" viewBox="0 0 24 24"><use href="#scale" x="-3"/><circle cx="19" cy="6" r="3.500" fill="none" stroke="#fff" stroke-width="1.500"/></svg></button>
            <button class="on" aria-label="AutoScale"><svg width="24" height="24" viewBox="0 0 24 24"><use href="#scale" x="-2"/><path d="M20 0l-5 7h3l-2 5 7-7h-4z" fill="#fff"/></svg></button>
            <button aria-label="Annotation scale"><svg width="24" height="24"><use href="#scale"/></svg></button>
            <button class="ratio">1:1<svg width="10" height="6"><use href="#caret"/></svg></button>
        </div>
        <div class="cell">
            <button aria-label="Workspace"><svg width="22" height="22" viewBox="0 0 22 22"><circle cx="11" cy="11" r="6" fill="none" stroke="#ddd" stroke-width="5"/><circle cx="11" cy="11" r="9" fill="none" stroke="#ddd" stroke-width="3" stroke-dasharray="4 3"/></svg></button>
            <button class="thin" aria-label="Workspace list"><svg width="10" height="6"><use href="#caret"/></svg></button>
        </div>
        <div class="cell"><button aria-label="Annotation monitor"><svg width="22" height="22" viewBox="0 0 22 22"><path d="M11 0v22M0 11h22" stroke="#eee" stroke-width="2"/></svg></button></div>
        <div class="cell"><button aria-label="Isolate objects"><svg width="24" height="24" viewBox="0 0 24 24" class="ln"><path d="M1 2h8v8H1zM10 15l5 8H5z"/><circle cx="18" cy="10" r="4.500"/></svg></button></div>
        <div class="cell">
            <button aria-label="Clean screen"><svg width="24" height="18" viewBox="0 0 24 18" class="ln"><path d="M1 1h22v16H1z"/><path d="M14 8l5-4M15 4h4v4M10 10l-5 4M5 10v4h4"/></svg></button>
            <button aria-label="Customization"><svg width="24" height="20" viewBox="0 0 24 20"><path d="M0 1h24M0 10h24M0 19h24" stroke="#eee" stroke-width="2"/></svg></button>
        </div>
    </div>
</div>

<footer class="taskbar">
    <button class="task" aria-label="Start"><svg width="34" height="34" viewBox="0 0 34 34"><path d="M0 0h16v16H0zM18 0h16v16H18zM0 18h16v16H0zM18 18h16v16H18z" fill="url(#win)"/></svg></button>
    <button class="find-pill"><svg width="19" height="20" viewBox="0 0 19 20"><circle cx="11" cy="8" r="7" fill="none" stroke="#333" stroke-width="2"/><path d="M6 13l-5 6" stroke="#333" stroke-width="2"/></svg>Ara</button>
    <button class="task" aria-label="Task view"><svg width="34" height="34" viewBox="0 0 34 34"><path d="M9 1h24v22H9z" fill="#f5f5f5"/><path d="M1 10h26v23H1z" fill="#2b2b2b"/><path d="M9 10h18v13H9z" fill="#b5b5b5"/></svg></button>
    <button class="task" aria-label="Weather"><svg width="34" height="34" viewBox="0 0 34 34"><circle cx="10" cy="12" r="7" fill="#f0a030"/><path d="M8 32q-7 0-7-6t7-6q2-6 9-6t9 7q7 0 7 6t-6 5z" fill="#a9c4f0"/><path d="M8 32q-7 0-7-6 6-4 14 0t18 0q0 6-6 6z" fill="#d2e0f8"/></svg><span class="temp">7°</span></button>
    <button class="task" aria-label="Chat"><svg width="34" height="34" viewBox="0 0 34 34"><path d="M18 1a16 16 0 1 1-8 30l-9 2 3-9A16 16 0 0 1 18 1z" fill="url(#chat)"/><rect x="8" y="11" width="13" height="12" rx="2" fill="#fff"/><path d="M22 15l5-4v12l-5-4z" fill="#fff"/></svg></button>
    <button class="task" aria-label="Mail"><svg width="34" height="34" viewBox="0 0 34 34"><path d="M0 11L17 0l17 11v4H0z" fill="#0e5aa8"/><path d="M0 11h34v21H0z" fill="#1e90e0"/><path d="M0 32L17 20l17-9v21z" fill="#39a9f0"/><path d="M4 11h26L17 21z" fill="#fff"/></svg></button>
    <button class="task" aria-label="Edge"><svg width="34" height="34" viewBox="0 0 34 34"><circle cx="17" cy="17" r="17" fill="url(#edge)"/><path d="M2 24Q2 12 13 11q8 0 9 6-2-3-5-2-5 2-3 8 3 6 14 4-10 9-20 4-4-3-6-7z" fill="#0e4f96"/><path d="M17 15q-5 1-4 6 2 6 9 6 8-1 11-6-3 3-9 2-5-1-4-5 0-3-3-3z" fill="#dadada"/></svg></button>
    <button class="task" aria-label="Office"><svg width="34" height="34" viewBox="0 0 34 34"><path d="M5 8L19 1l11 4v24l-11 4-13-5 13 1V8l-8 3v14l-6 3z" fill="url(#office)"/></svg></button>
    <button class="task" aria-label="WhatsApp"><svg width="34" height="34" viewBox="0 0 34 34"><path d="M17 0a17 17 0 1 1-8 32l-9 2 3-9A17 17 0 0 1 17 0z" fill="#f4f7f4"/><path d="M17 3a14 14 0 1 1-7 26l-6 1 2-6A14 14 0 0 1 17 3z" fill="#3fb556"/><path d="M11 9l3-1 2 5-2 2q2 4 6 6l2-2 5 2q0 5-5 5Q10 22 10 12z" fill="#fff"/></svg></button>
    <button class="task run" aria-label="Bandicam"><svg width="34" height="34" viewBox="0 0 34 34"><rect width="34" height="34" rx="4" fill="#0d82ea"/><path d="M12 9a10 10 0 1 1 0 16" fill="none" stroke="#fff" stroke-width="2.500"/><path d="M5 12l5 4h14v3H10l-5 4z" fill="#fff"/></svg></button>
    <button class="task run" aria-label="Discord"><svg width="34" height="34" viewBox="0 0 34 34"><circle cx="17" cy="17" r="17" fill="#5865e8"/><path d="M10 11l4-1h6l4 1q4 6 4 12l-5 2-2-2h-8l-2 2-5-2q0-6 4-12z" fill="#fff"/><circle cx="13" cy="18" r="2" fill="#5865e8"/><circle cx="21" cy="18" r="2" fill="#5865e8"/></svg><span class="badge">9+</span></button>
    <button class="task run" aria-label="Chrome"><svg width="34" height="34" viewBox="0 0 34 34"><circle cx="17" cy="17" r="17" fill="#e04436"/><path d="M17 17L2.300 8.500A17 17 0 0 0 17 34z" fill="#2f9e4f"/><path d="M2.300 8.500L10 21l7 4v9A17 17 0 0 1 2.300 8.500z" fill="#2f9e4f"/><path d="M32 9.500H17v8l7 3-7.500 13.500A17 17 0 0 0 32 9.500z" fill="#f8c32c"/><circle cx="17" cy="17" r="8" fill="#fff"/><circle cx="17" cy="17" r="6" fill="#3c7de8"/></svg></button>
    <button class="task run focus" aria-label="AutoCAD"><svg width="24" height="27"><use href="#logo"/></svg></button>

    <div class="tray">
        <button aria-label="Hidden icons"><svg width="18" height="11" viewBox="0 0 18 11"><path d="M1 10l8-8 8 8" fill="none" stroke="#333" stroke-width="2"/></svg></button>
        <button class="k" aria-label="Touch keyboard"><svg width="24" height="17" viewBox="0 0 24 17"><rect x="1" y="1" width="22" height="15" rx="2" fill="none" stroke="#333" stroke-width="1.500"/><path d="M4 5h16M4 8h16" stroke="#333" stroke-width="1.500" stroke-dasharray="2 2"/><path d="M7 12h10" stroke="#333" stroke-width="1.500"/></svg></button>
        <button class="m" aria-label="Microphone"><svg width="18" height="24" viewBox="0 0 18 24"><rect x="5" y="1" width="8" height="15" rx="4" fill="#bcd8f2" stroke="#2a63a8" stroke-width="1.500"/><path d="M1 11q0 8 8 8t8-8M9 19v4" fill="none" stroke="#2a63a8" stroke-width="1.500"/></svg></button>
        <button class="net" aria-label="Network">
            <svg width="24" height="18" viewBox="0 0 24 18"><path d="M1 7q11-11 22 0M4 10q8-8 16 0M8 13q4-4 8 0" fill="none" stroke="#222" stroke-width="1.500"/><circle cx="12" cy="16" r="2" fill="#222"/></svg>
            <svg width="20" height="18" viewBox="0 0 20 18"><path d="M1 6h3l5-4v14l-5-4H1z" fill="none" stroke="#222" stroke-width="1.500"/><path d="M12 6q2 3 0 6M14 4q4 5 0 10M16 2q6 7 0 14" fill="none" stroke="#222"/></svg>
            <svg width="23" height="14" viewBox="0 0 23 14"><rect x="1" y="1" width="19" height="12" rx="3" fill="none" stroke="#111" stroke-width="1.500"/><path d="M3 3h9v8H3zM21 5h2v4h-2z" fill="#111"/></svg>
        </button>
        <button class="clock">01:10<br>14.12.2022</button>
        <span class="count">3</span>
    </div>
</footer>

</body>
</html>
```
FILE: styles.css
```css
* {
    margin: 0;
    padding: 0;
    box-sizing: border-box;
}

body {
    font-family: "Noto Sans", "Open Sans", sans-serif;
    font-size: 16px;
    color: #e4e4e4;
    background: #383838;
    display: flex;
    flex-direction: column;
    height: 100vh;
    overflow: hidden;
}

button {
    font: inherit;
    color: inherit;
    background: none;
    border: none;
    cursor: pointer;
    display: flex;
    align-items: center;
    justify-content: center;
}

a {
    color: inherit;
    text-decoration: none;
}

svg {
    flex: none;
}

.defs {
    position: absolute;
    width: 0;
    height: 0;
}

.ln {
    fill: none;
    stroke: #dcdcdc;
    stroke-width: 1.5;
}

.ln .dot {
    fill: #8fb8dc;
    stroke: none;
}

/* Title bar and tabs */
.header {
    display: grid;
    grid-template-columns: 58px 1fr;
    grid-template-rows: 33px 28px;
    background: #535353;
    border-bottom: 1px solid #3a3a3a;
}

.app-btn {
    grid-row: span 2;
    height: 57px;
    background: linear-gradient(#6e6e6e, #a8a8a8);
    border: 1px solid #111;
    border-width: 1px 2px 2px 1px;
    align-items: flex-start;
    padding-top: 2px;
    gap: 6px;
}

.app-caret {
    margin-top: 21px;
}

.titlebar {
    display: flex;
    background: #fff;
}

.quick {
    display: flex;
    align-items: center;
    background: linear-gradient(#8c8c8c, #5c5c5c);
    width: 368px;
    padding-left: 6px;
}

.quick button {
    width: 34px;
    height: 32px;
}

.quick .slim {
    width: 16px;
}

.quick .last {
    width: 24px;
}

.caption {
    flex: 1;
    color: #1c1c1c;
    line-height: 32px;
    text-align: center;
    white-space: nowrap;
}

.caption span {
    margin-left: 18px;
}

.infocenter {
    display: flex;
    align-items: center;
    width: 629px;
    background: linear-gradient(#8c8c8c, #606060);
}

.info-toggle {
    width: 19px;
    height: 33px;
}

.search {
    width: 253px;
    height: 31px;
    background: #6c6c6c;
    border: 2px solid #474747;
    padding: 0 4px;
    font: italic 15px "Noto Sans", "Open Sans", sans-serif;
    color: #eee;
}

.search::placeholder {
    color: #b4b4b4;
}

.find {
    width: 36px;
}

.signin {
    width: 163px;
    gap: 6px;
    padding-left: 4px;
    justify-content: flex-start;
    font-size: 15px;
}

.push {
    margin-left: auto;
}

.cart {
    width: 48px;
}

.a360,
.help {
    gap: 8px;
}

.help {
    margin-left: 12px;
    padding-left: 14px;
    gap: 10px;
    border-left: 1px solid #7f7f7f;
}

.window-btns {
    display: flex;
    width: 229px;
    padding-left: 34px;
}

.window-btns button {
    width: 64px;
    padding-bottom: 3px;
}

.tabs {
    display: flex;
    padding: 4px 0 0 8px;
    color: #d2d2d2;
    white-space: nowrap;
}

.tabs a {
    padding: 0 14px 0 13px;
    line-height: 22px;
}

.tabs .active {
    padding: 0 12px;
    margin-right: 4px;
    background: linear-gradient(#757575, #5b5b5b);
    border: 1px solid #3a3a3a;
    border-bottom: none;
    color: #eee;
}

.minimize {
    margin-left: 30px;
    gap: 8px;
}

/* Ribbon */
.ribbon {
    display: flex;
    height: 139px;
    padding-left: 2px;
    background: linear-gradient(#505050, #363636);
    border-bottom: 1px solid #777;
}

.panel {
    display: flex;
    flex-direction: column;
    background: #5b5b5b;
    border-right: 2px solid #434343;
    border-left: 1px solid #686868;
}

.body {
    flex: 1;
    display: flex;
    padding-top: 6px;
}

.panel footer {
    position: relative;
    display: flex;
    align-items: center;
    justify-content: center;
    gap: 10px;
    height: 27px;
    padding-bottom: 2px;
    background: linear-gradient(#545454, #4a4a4a);
}

.corner {
    position: absolute;
    right: 6px;
    bottom: 8px;
}

.section footer {
    gap: 8px;
    padding-right: 20px;
}

.big {
    flex-direction: column;
    justify-content: flex-start;
    padding-top: 4px;
    line-height: 21px;
    height: 101px;
}

.big svg:first-child {
    margin-bottom: 4px;
}

.big svg:last-child:not(:first-child) {
    margin-top: 4px;
}

.grid {
    display: grid;
    grid-auto-rows: 34px;
    align-content: start;
}

.grid svg {
    width: 24px;
    height: 24px;
}

.grid .drop svg,
.grid .combo svg:last-child {
    width: 7px;
    height: 4px;
}

.modeling .big:first-child {
    width: 66px;
}

.modeling .big {
    width: 80px;
}

.modeling .grid {
    width: 41px;
}

.mesh .big {
    width: 70px;
}

.mesh .grid {
    width: 36px;
}

.solid .grid {
    grid-template-columns: 39px 39px 32px 20px;
}

.draw .grid {
    grid-template-columns: 38px 32px 44px 16px;
}

.modify .grid {
    grid-template-columns: 36px 40px 34px 42px 28px 20px;
}

.section .big {
    width: 104px;
}

.coords .grid {
    grid-template-columns: 38px 12px 50px 34px 34px 33px;
}

.coords .world {
    grid-column: 3 / 7;
    margin: 1px 3px 3px 8px;
}

.grid .world svg:last-child {
    width: 11px;
    height: 6px;
}

.combo {
    display: flex;
    align-items: center;
    height: 30px;
    padding: 0 4px;
    border: 1px solid #3b3b3b;
    background: linear-gradient(#6a6a6a, #565656);
}

.combo select {
    flex: 1;
    min-width: 0;
    appearance: none;
    background: none;
    border: none;
    padding-left: 3px;
    font: inherit;
    color: inherit;
}

.stack {
    flex-direction: column;
    gap: 4px;
    padding: 8px 3px 0 3px;
    width: 176px;
}

.viewbtn {
    gap: 8px;
    align-self: flex-start;
    margin: 4px 0 0 5px;
}

.selection .body {
    padding-left: 2px;
}

.selection .big {
    width: 97px;
}

.selection .on {
    width: 61px;
    border: 1px solid #2d4b78;
    background: linear-gradient(#6fa3df, #4a6ba8);
    padding-top: 3px;
}

.selection .gizmo {
    position: relative;
    width: 77px;
}

.selection .side {
    position: absolute;
    right: 2px;
    top: 70px;
}

.folded {
    flex-direction: column;
    justify-content: flex-start;
    width: 84px;
    height: 135px;
    margin: 2px 0 0 2px;
    padding: 6px 0 8px;
    gap: 4px;
    background: linear-gradient(#6c6c6c, #545454);
    border-right: 2px solid #434343;
}

.down {
    margin-top: auto;
}

/* Drawing tabs */
.files {
    display: flex;
    align-items: flex-end;
    height: 41px;
    padding-left: 25px;
    background: #383838;
    border-bottom: 6px solid #5b5c60;
}

.file {
    display: flex;
    align-items: center;
    justify-content: space-between;
    width: 180px;
    height: 30px;
    padding: 0 20px;
    background: #585858;
    border-radius: 14px 14px 0 0;
    color: #bdbdbd;
}

.file.current {
    width: 172px;
    padding: 0 18px 0 13px;
    background: linear-gradient(#777, #5b5c60);
    color: #efefef;
}

.add {
    width: 32px;
    height: 20px;
    margin: 0 0 4px 9px;
    background: #555;
    border-radius: 4px 10px 4px 10px;
}

/* Drawing area */
.canvas {
    position: relative;
    flex: 1;
    background-color: #202731;
    background-image: linear-gradient(#2b333d, #2b333d), linear-gradient(90deg, #252c36 1px, transparent 1px);
    background-size: 100% 1px, 298px 100%;
    background-position: 0 393px, 297px 0;
    background-repeat: no-repeat, repeat-x;
}

.canvas > * {
    position: absolute;
}

.view-label {
    left: 5px;
    top: 9px;
    line-height: 20px;
    color: #dde1e6;
}

.circle {
    left: 503px;
    top: 46px;
}

.view-btns {
    display: flex;
    gap: 14px;
    right: 27px;
    top: 15px;
}

.compass {
    right: 35px;
    top: 56px;
    display: grid;
    grid-template: 35px 54px 35px / 35px 54px 35px;
    place-items: center;
    border-radius: 50%;
    box-shadow: inset 0 0 0 15px #474e59;
    font: bold 20px "Liberation Sans", Arial, sans-serif;
    color: #b9bec6;
}

.n {
    grid-area: 1 / 2;
    align-self: start;
    margin-top: -6px;
}

.w {
    grid-area: 2 / 1;
    justify-self: start;
    margin-left: -6px;
}

.e {
    grid-area: 2 / 3;
    justify-self: end;
    margin-right: -3px;
}

.s {
    grid-area: 3 / 2;
    align-self: end;
    margin-bottom: -6px;
}

.cube {
    grid-area: 2 / 2;
    width: 53px;
    height: 53px;
    background: #b3b6bb;
    border: 1px solid #90949a;
    font-size: 13px;
    color: #4c4f55;
}

.cube span {
    background: #a8abb1;
    padding: 9px 3px;
}

.wcs {
    right: 64px;
    top: 207px;
    width: 67px;
    height: 24px;
    padding-left: 6px;
    justify-content: flex-start;
    background: #a0a4ae;
    border: 1px solid #b9bdc5;
    border-radius: 5px;
    font: 15px "Liberation Sans", Arial, sans-serif;
    color: #686c75;
}

.navbar {
    right: 17px;
    top: 268px;
    width: 45px;
    height: 297px;
    padding: 4px 5px;
    display: flex;
    flex-direction: column;
    align-items: center;
    justify-content: space-between;
    background: #5a5f64;
    border: 1px solid #6b7075;
    border-radius: 5px;
}

.navbar svg {
    fill: none;
    stroke: #484d53;
    stroke-width: 2;
}

.navbar .tiny {
    align-self: flex-end;
    stroke-width: 1;
}

.navbar i {
    width: 4px;
    height: 3px;
    background: #3d4247;
}

.scroll {
    right: 0;
    top: 0;
    bottom: 0;
    width: 12px;
    background: #b4cfea;
    border-left: 1px solid #dcebf8;
    border-right: 2px solid #1d4a70;
}

.thumb {
    right: 0;
    top: 542px;
    width: 16px;
    height: 56px;
    background: #4b4d54;
}

.ucs {
    left: 0;
    bottom: 3px;
}

.pickbox {
    left: 408px;
    top: 203px;
    width: 11px;
    height: 11px;
    border: 2px solid #c5cad0;
}

.prompt {
    left: 436px;
    top: 232px;
    width: 234px;
    height: 31px;
    padding: 0 4px 2px 5px;
    display: flex;
    align-items: center;
    justify-content: space-between;
    background: #98989a;
    border: 2px solid #15181d;
    color: #25262b;
}

.prompt svg {
    margin-top: 4px;
}

/* Command line */
.command {
    left: 20%;
    right: 20%;
    bottom: 0;
    font: 16px "DejaVu Sans Mono", monospace;
    white-space: nowrap;
}

.history {
    width: fit-content;
    margin: 0 0 6px 84px;
    padding: 0 16px 0 3px;
    line-height: 21px;
    background: #55575a;
    color: #ededed;
}

.old {
    background: #4c4f54cc;
    color: #b8babd;
}

.history + .cmdbar {
    margin-top: -2px;
}

.cmdbar {
    display: flex;
    align-items: center;
    height: 37px;
    background: #fff;
    color: #222;
    border: 1px solid #777;
}

.handle {
    display: flex;
    align-items: center;
    gap: 11px;
    align-self: stretch;
    width: 75px;
    padding-left: 4px;
    background: linear-gradient(#717171, #434343);
}

.recent {
    gap: 3px;
    margin: 0 8px 0 7px;
}

.cmdbar b {
    margin-right: 9px;
}

.opt {
    height: 24px;
    padding: 0 1px;
    margin-right: 6px;
    background: #d4d4d6;
    border-radius: 3px;
}

.opt + span {
    margin-left: -6px;
}

.opt u {
    text-decoration: none;
    color: #3e36c8;
}

.cmdbar input {
    flex: 1;
    min-width: 0;
    border: none;
    outline: none;
    font: inherit;
    background: none;
}

.up {
    margin-right: 5px;
}

/* Status bar */
.status {
    display: flex;
    justify-content: space-between;
    height: 41px;
    border-top: 1px solid #5c5c5c;
    background: #383838;
}

.layouts {
    display: flex;
    align-items: flex-start;
    gap: 3px;
    padding-left: 16px;
    color: #a6a6a6;
}

.layouts a {
    padding: 0 15px;
    line-height: 24px;
    background: #555;
    border-radius: 0 0 12px 12px;
}

.layouts .current {
    background: linear-gradient(#565656, #7a7a7a);
    font-weight: bold;
    color: #fff;
}

.layouts button {
    width: 32px;
    height: 24px;
    background: #4c4c4c;
    border-radius: 0 0 12px 12px;
}

.toggles {
    display: flex;
    height: 39px;
    padding: 1px 2px 1px 1px;
    background: #484848;
    border-bottom: 2px solid #4a4a4a;
}

.cell {
    display: flex;
    align-items: center;
    gap: 2px;
    padding: 0 1px;
    background: #4f4f4f;
    border: 1px solid #737373;
}

.cell button {
    width: 32px;
    height: 31px;
}

.cell .on {
    background: #5487c3;
}

.cell .thin {
    width: 19px;
}

.cell .wide {
    width: 34px;
}

.cell .ratio {
    width: 48px;
    gap: 4px;
    font-size: 15px;
    color: #eee;
}

.model button {
    width: 64px;
    color: #eee;
}

.on .ln {
    stroke: #fff;
}

/* Taskbar */
.taskbar {
    display: flex;
    align-items: center;
    height: 67px;
    padding: 0 28px 0 15px;
    background: #dadada;
    color: #2a2a2a;
}

.task {
    position: relative;
    width: 52px;
    height: 52px;
    margin-right: 10px;
}

.task:first-child {
    width: 62px;
    margin-right: 6px;
}

.find-pill {
    width: 137px;
    height: 42px;
    gap: 8px;
    margin-right: 10px;
    background: #f5f5f5;
    border-radius: 21px;
    font-size: 15px;
}

.run::after {
    content: "";
    position: absolute;
    bottom: 0;
    left: 22px;
    width: 8px;
    height: 4px;
    border-radius: 2px;
    background: #7c7c7c;
}

.focus {
    background: #f1eeee;
    border-radius: 4px;
}

.focus::after {
    left: 15px;
    width: 22px;
    background: #0d6fc0;
}

.temp {
    position: absolute;
    top: 2px;
    right: -2px;
    width: 32px;
    line-height: 22px;
    border-radius: 11px;
    background: #f2f2f2;
    font-size: 15px;
}

.badge {
    position: absolute;
    top: 2px;
    right: 2px;
    width: 20px;
    line-height: 20px;
    border-radius: 50%;
    background: #ec5450;
    color: #fff;
    font-size: 13px;
}

.tray {
    display: flex;
    align-items: center;
    margin-left: auto;
}

.k {
    margin-left: 18px;
}

.m {
    margin-left: 25px;
}

.net {
    gap: 11px;
    margin: 0 22px 0 24px;
}

.clock {
    display: block;
    font-size: 15px;
    line-height: 22px;
    text-align: right;
}

.count {
    width: 22px;
    margin-left: 12px;
    line-height: 22px;
    border-radius: 50%;
    background: #0b72d0;
    color: #fff;
    font-size: 13px;
    text-align: center;
}
```
